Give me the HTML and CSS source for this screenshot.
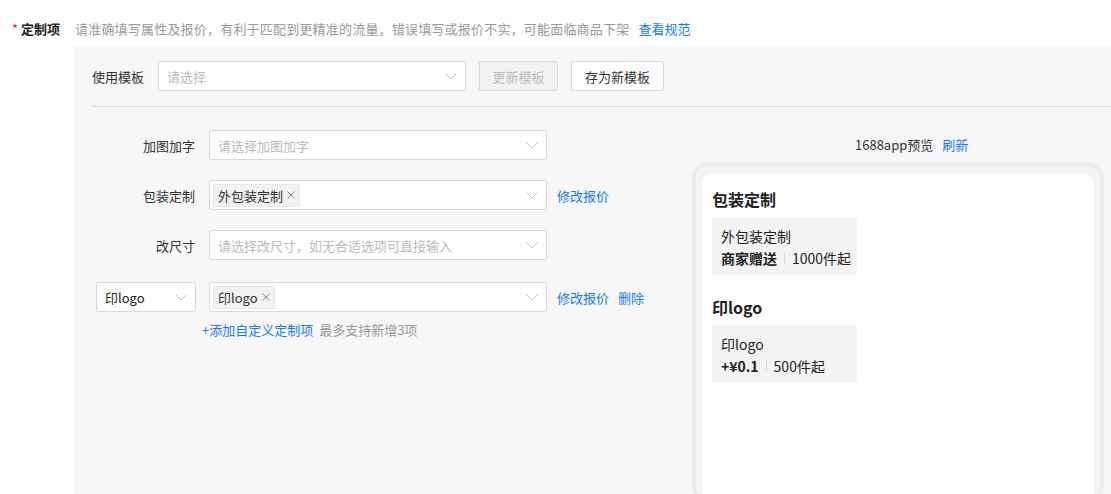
FILE: index.html
```html
<!DOCTYPE html>
<html lang="zh-CN">
<head>
  <meta charset="UTF-8" />
  <title>定制项</title>
  <link rel="stylesheet" href="styles.css">
</head>
<body>
  <div class="field">
    <div class="field-label"><span class="star">*</span> 定制项</div>
    <div class="field-hint">请准确填写属性及报价，有利于匹配到更精准的流量，错误填写或报价不实，可能面临商品下架<a class="link hint-link" href="#">查看规范</a></div>
  </div>

  <div class="panel">
    <div class="template-row">
      <span class="template-label">使用模板</span>
      <div class="select template-select">
        <span class="placeholder">请选择</span>
        <svg class="arrow" width="12" height="7" viewBox="0 0 12 7"><polyline points="0.5,0.5 6,6 11.5,0.5" fill="none" stroke="#c4c4c4" stroke-width="1"/></svg>
      </div>
      <button class="btn btn-disabled">更新模板</button>
      <button class="btn btn-save">存为新模板</button>
    </div>
    <div class="divider"></div>

    <div class="editor">
      <div class="form-col">
        <div class="form-row">
          <div class="row-label">加图加字</div>
          <div class="select">
            <span class="placeholder">请选择加图加字</span>
            <svg class="arrow" width="12" height="7" viewBox="0 0 12 7"><polyline points="0.5,0.5 6,6 11.5,0.5" fill="none" stroke="#c4c4c4" stroke-width="1"/></svg>
          </div>
        </div>
        <div class="form-row">
          <div class="row-label">包装定制</div>
          <div class="select">
            <span class="tag">外包装定制<svg class="tag-close" width="8" height="8" viewBox="0 0 8 8"><path d="M0.5 0.5L7.5 7.5M7.5 0.5L0.5 7.5" stroke="#888" stroke-width="1"/></svg></span>
            <svg class="arrow" width="12" height="7" viewBox="0 0 12 7"><polyline points="0.5,0.5 6,6 11.5,0.5" fill="none" stroke="#c4c4c4" stroke-width="1"/></svg>
          </div>
          <a class="link row-action" href="#">修改报价</a>
        </div>
        <div class="form-row">
          <div class="row-label">改尺寸</div>
          <div class="select">
            <span class="placeholder">请选择改尺寸，如无合适选项可直接输入</span>
            <svg class="arrow" width="12" height="7" viewBox="0 0 12 7"><polyline points="0.5,0.5 6,6 11.5,0.5" fill="none" stroke="#c4c4c4" stroke-width="1"/></svg>
          </div>
        </div>
        <div class="form-row custom-row">
          <div class="select name-select">
            <span class="value">印logo</span>
            <svg class="arrow" width="12" height="7" viewBox="0 0 12 7"><polyline points="0.5,0.5 6,6 11.5,0.5" fill="none" stroke="#c4c4c4" stroke-width="1"/></svg>
          </div>
          <div class="select">
            <span class="tag">印logo<svg class="tag-close" width="8" height="8" viewBox="0 0 8 8"><path d="M0.5 0.5L7.5 7.5M7.5 0.5L0.5 7.5" stroke="#888" stroke-width="1"/></svg></span>
            <svg class="arrow" width="12" height="7" viewBox="0 0 12 7"><polyline points="0.5,0.5 6,6 11.5,0.5" fill="none" stroke="#c4c4c4" stroke-width="1"/></svg>
          </div>
          <a class="link row-action" href="#">修改报价</a>
          <a class="link row-action" href="#">删除</a>
        </div>
        <div class="add-row">
          <a class="link" href="#">+添加自定义定制项</a>
          <span class="add-tip">最多支持新增3项</span>
        </div>
      </div>

      <div class="preview-col">
        <div class="preview-title">1688app预览<a class="link refresh" href="#">刷新</a></div>
        <div class="phone">
          <div class="phone-screen">
            <div class="group-title">包装定制</div>
            <div class="option-card">
              <div class="option-name">外包装定制</div>
              <div class="option-meta"><b>商家赠送</b><i class="sep"></i>1000件起</div>
            </div>
            <div class="group-title group-gap">印logo</div>
            <div class="option-card">
              <div class="option-name">印logo</div>
              <div class="option-meta"><b>+¥0.1</b><i class="sep"></i>500件起</div>
            </div>
          </div>
        </div>
      </div>
    </div>
  </div>
</body>
</html>
```

FILE: styles.css
```css
* {
  box-sizing: border-box;
  margin: 0;
  padding: 0;
}

body {
  font-family: "Noto Sans CJK SC", "Noto Sans", sans-serif;
  font-size: 13px;
  color: #333;
  background: #fff;
  overflow: hidden;
  height: 494px;
}

a {
  text-decoration: none;
}

.link {
  color: #1677ff;
}

/* top field */
.field {
  display: flex;
  align-items: flex-start;
  padding-top: 20px;
  height: 46px;
}

.field-label {
  width: 75px;
  padding-left: 12px;
  font-weight: bold;
  line-height: 18px;
  color: #222;
}

.star {
  color: #f5222d;
  font-weight: normal;
}

.field-hint {
  color: #999;
  line-height: 18px;
  letter-spacing: 0.2px;
}

.hint-link {
  margin-left: 9px;
  letter-spacing: 0;
}

/* gray panel */
.panel {
  margin-left: 74px;
  background: #f7f7f7;
  height: 448px;
}

.template-row {
  display: flex;
  align-items: center;
  padding: 15px 0 0 18px;
}

.template-label {
  margin-right: 14px;
}

.select {
  position: relative;
  display: flex;
  align-items: center;
  width: 338px;
  height: 30px;
  background: #fff;
  border: 1px solid #d9d9d9;
  border-radius: 2px;
  padding: 0 8px;
}

.template-select {
  width: 308px;
  margin-right: 13px;
}

.placeholder {
  color: #bbb;
}

.arrow {
  position: absolute;
  right: 8px;
  top: 11px;
}

.btn {
  height: 30px;
  padding: 0 12px;
  font-family: inherit;
  font-size: 13px;
  color: #333;
  background: #fff;
  border: 1px solid #d9d9d9;
  border-radius: 2px;
  margin-right: 13px;
}

.btn-disabled {
  width: 79px;
  color: #bbb;
  background: #f2f2f2;
}

.btn-save {
  width: 93px;
}

.divider {
  height: 1px;
  background: #ddd;
  margin: 15px 0 0 17px;
}

/* editor */
.editor {
  display: flex;
}

.form-col {
  width: 618px;
  padding: 23px 0 0 22px;
}

.form-row {
  display: flex;
  align-items: center;
  margin-bottom: 20px;
}

.custom-row {
  margin-top: 22px;
  margin-bottom: 0;
}

.row-label {
  width: 99px;
  text-align: right;
  margin-right: 14px;
}

.name-select {
  width: 100px;
  margin-right: 13px;
  color: #222;
}

.tag {
  display: inline-flex;
  align-items: center;
  height: 23px;
  padding: 0 4px;
  margin-left: -5px;
  background: #f2f2f2;
  border: 1px solid #e8e8e8;
  border-radius: 2px;
  color: #333;
}

.tag-close {
  margin-left: 4px;
}

.row-action {
  margin-left: 10px;
}

.row-action + .row-action {
  margin-left: 9px;
}

.add-row {
  padding: 9px 0 0 106px;
  line-height: 18px;
}

.add-tip {
  color: #999;
  margin-left: 3px;
}

/* preview */
.preview-col {
  width: 412px;
  padding-top: 29px;
}

.preview-title {
  padding-left: 163px;
  line-height: 18px;
  color: #333;
}

.refresh {
  margin-left: 9px;
}

.phone {
  margin-top: 8px;
  height: 340px;
  border: 4px solid #ebebeb;
  border-radius: 16px;
  background: #f4f4f4;
  padding: 7px 6px 0 6px;
}

.phone-screen {
  height: 100%;
  background: #fff;
  border-radius: 12px 12px 0 0;
  padding: 14px 10px;
}

.group-title {
  font-size: 16px;
  font-weight: bold;
  line-height: 24px;
  color: #222;
  margin-bottom: 6px;
}

.group-gap {
  margin-top: 20px;
}

.option-card {
  width: 145px;
  background: #f4f4f4;
  border-radius: 4px;
  padding: 8px 0 6px 9px;
  font-size: 14px;
  line-height: 22px;
  color: #222;
  white-space: nowrap;
}

.option-meta {
  display: flex;
  align-items: center;
}

.option-meta b {
  font-weight: bold;
}

.sep {
  width: 1px;
  height: 10px;
  background: #d6d6d6;
  margin: 0 7px;
}
```
